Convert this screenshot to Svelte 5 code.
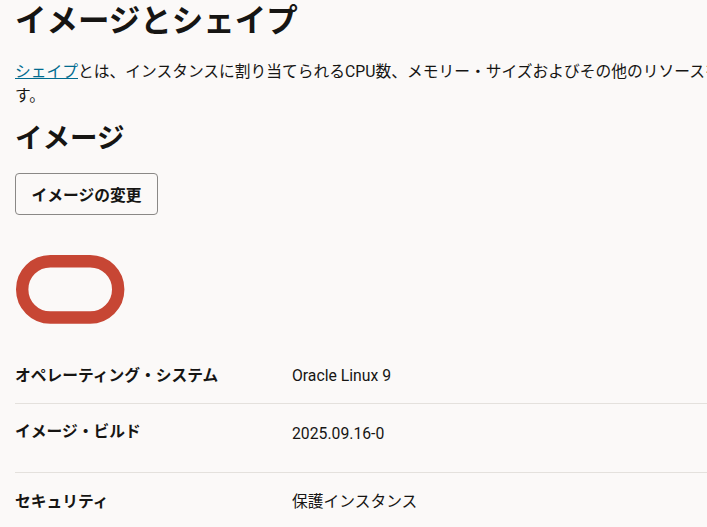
<script>
  const rows = [
    { label: 'オペレーティング・システム', value: 'Oracle Linux 9', cls: 'os' },
    { label: 'イメージ・ビルド', value: '2025.09.16-0', cls: 'build' },
    { label: 'セキュリティ', value: '保護インスタンス', cls: 'sec' }
  ];
</script>

<main class="page">
  <h1>イメージとシェイプ</h1>
  <p class="intro">
    <a href="#shape">シェイプ</a>とは、インスタンスに割り当てられるCPU数、メモリー・サイズおよびその他のリソースを決定するテンプレートです。
  </p>
  <h2>イメージ</h2>
  <button type="button">イメージの変更</button>
  <svg class="logo" width="109" height="69" viewBox="0 0 109 69" aria-hidden="true">
    <rect x="6.2" y="6.2" width="96" height="56.3" rx="28.1" fill="none" stroke="#c74634" stroke-width="12.4" />
  </svg>
  <dl>
    {#each rows as row}
      <div class="row {row.cls}">
        <dt>{row.label}</dt>
        <dd>{row.value}</dd>
      </div>
    {/each}
  </dl>
</main>

<style>
  :global(body) {
    background: #fbf9f8;
    overflow: hidden;
  }
  .page {
    width: 1000px;
    height: 527px;
    overflow: hidden;
    box-sizing: border-box;
    padding: 2px 0 0 15px;
    color: #161513;
    font-family: Roboto, "Noto Sans CJK JP", sans-serif;
  }
  h1 {
    margin: 0;
    font-size: 31.5px;
    line-height: 40px;
    font-weight: 700;
  }
  .intro {
    margin: 18px 0 0;
    width: 890px;
    font-size: 15.75px;
    line-height: 24px;
  }
  a {
    color: #006b8f;
    text-decoration: underline;
  }
  h2 {
    margin: 13px 0 0;
    font-size: 27.5px;
    line-height: 36px;
    font-weight: 700;
  }
  button {
    display: block;
    margin-top: 16px;
    width: 143px;
    height: 42px;
    padding: 0;
    background: transparent;
    border: 1px solid #8a8886;
    border-radius: 4px;
    color: #161513;
    font: 700 15.75px Roboto, "Noto Sans CJK JP", sans-serif;
  }
  .logo {
    display: block;
    margin-top: 40px;
    margin-left: 1px;
  }
  dl {
    margin: 40px 0 0;
    width: 1000px;
  }
  .row {
    display: flex;
    box-sizing: border-box;
    border-bottom: 1px solid #e4e1dd;
    font-size: 15.75px;
    line-height: 24px;
  }
  .os { height: 40px; }
  .build { height: 69px; padding-top: 16px; }
  .build dd { margin-top: 2px; }
  .sec { border-bottom: 0; padding-top: 17px; }
  dt {
    width: 277px;
    font-weight: 700;
  }
  dd {
    margin: 0;
  }
</style>
